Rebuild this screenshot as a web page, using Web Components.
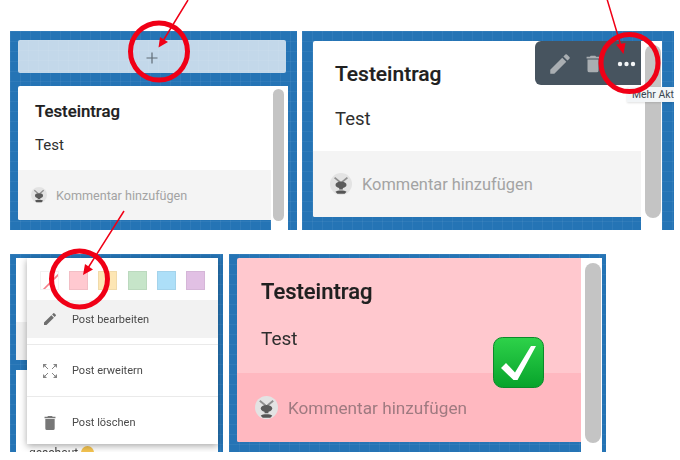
<!DOCTYPE html>
<html lang="de">
<head>
<meta charset="utf-8">
<title>Testeintrag</title>
<style>
html,body{margin:0;padding:0;background:#fff;width:680px;height:460px;overflow:hidden}
body{font-family:Roboto,"Liberation Sans",sans-serif;color:#2b2b2b}
.sheet{filter:blur(.4px);width:680px;height:460px;position:relative;box-sizing:border-box;padding:31px 0 0 10px;display:flex;flex-direction:column;gap:24px}
.row{display:flex}
</style>
</head>
<body>
<template id="t-panel"><style>
:host{display:flex;flex-direction:column;position:relative;overflow:hidden;box-sizing:border-box;
background-color:#2574b5;
background-image:linear-gradient(rgba(255,255,255,.05) 1px,transparent 1px),linear-gradient(90deg,rgba(255,255,255,.05) 1px,transparent 1px);
background-size:10px 10px}
</style><slot></slot></template>

<template id="t-add"><style>
:host{display:flex;align-items:center;justify-content:center;box-sizing:border-box;border-radius:2px;padding-top:2px;
background-color:#c3d8ea;
background-image:linear-gradient(rgba(255,255,255,.05) 1px,transparent 1px),linear-gradient(90deg,rgba(255,255,255,.05) 1px,transparent 1px);
background-size:10px 10px}
svg{display:block}
</style><svg width="12" height="12" viewBox="0 0 12 12"><path d="M6 .5v11M.5 6h11" stroke="#5f6b75" stroke-width="1.2" fill="none"/></svg></template>

<template id="t-post"><style>
:host{display:flex;flex:1;min-height:0;align-items:stretch}
.card{flex:1;min-width:0;display:flex;flex-direction:column;border-radius:2px 0 0 2px;overflow:hidden;background:var(--bg,#fff);margin-bottom:var(--mb,10px);position:relative}
.body{flex:1;box-sizing:border-box;padding:var(--pt,14px) 0 0 var(--pl,17px)}
.title{font-size:var(--ts,16.8px);font-weight:500;line-height:var(--tl,22px);color:#202020;-webkit-text-stroke:.2px #202020}
.text{font-size:var(--xs,15px);line-height:var(--xl,20px);margin-top:var(--xm,13px);color:#2e2e2e}
.foot{height:var(--fh,50px);box-sizing:border-box;flex:none;display:flex;align-items:center;gap:var(--fg,9px);padding-left:var(--fp,13px);background:var(--fbg,#f4f4f4);color:var(--fc,#a3a3a3);font-size:var(--fs,12.6px)}
.strip{width:var(--sw,17px);background:var(--sbg,#fff);flex:none;box-sizing:border-box;padding:var(--st,3px) var(--sr,4px) var(--sb,9px) var(--sl,2px);display:flex}
.thumb{flex:1;border-radius:8px;background:#c4c4c4}
</style>
<div class="card"><div class="body"><div class="title">Testeintrag</div><div class="text">Test</div></div>
<div class="foot"><post-avatar></post-avatar><span>Kommentar hinzufügen</span></div></div>
<div class="strip"><div class="thumb"></div></div><slot></slot></template>

<template id="t-avatar"><style>
:host{display:block;flex:none;width:var(--av,16px);height:var(--av,16px)}
svg{display:block;width:100%;height:100%}
</style><svg viewBox="0 0 24 24"><circle cx="12" cy="12" r="12" fill="#e3e3e3"/><path d="M5 5l6 5M19 5l-6 5" stroke="#8f8f8f" stroke-width="2"/><ellipse cx="12" cy="13" rx="6" ry="3.6" fill="#5b5b5b"/><path d="M10 15h4v3h-4z" fill="#5b5b5b"/><path d="M6 20.5c2-2 10-2 12 0l-2 2.2h-8z" fill="#555"/></svg></template>

<template id="t-toolbar"><style>
:host{position:absolute;left:233px;top:10px;width:106px;height:44px;background:#47545f;border-radius:0 0 0 6px;border-top-left-radius:6px;display:block}
svg{position:absolute}
</style>
<svg style="left:12px;top:10px" width="26" height="26" viewBox="0 0 24 24"><path fill="#a9aeb2" d="M3 17.25V21h3.75L17.81 9.94l-3.75-3.75zM20.71 7.04a1 1 0 0 0 0-1.41l-2.34-2.34a1 1 0 0 0-1.41 0l-1.83 1.83 3.75 3.75z"/></svg>
<svg style="left:47px;top:11px" width="22" height="24" viewBox="0 0 24 24"><path fill="#a9aeb2" d="M6 19a2 2 0 0 0 2 2h8a2 2 0 0 0 2-2V7H6zM19 4h-3.500l-1-1h-5l-1 1H5v2h14z"/></svg>
<svg style="left:82px;top:20px" width="19" height="6" viewBox="0 0 19 6"><circle cx="3" cy="3" r="2.200" fill="#f4f6f7"/><circle cx="9.500" cy="3" r="2.200" fill="#f4f6f7"/><circle cx="16" cy="3" r="2.200" fill="#f4f6f7"/></svg></template>

<template id="t-tip"><style>
:host{position:absolute;left:325px;top:56px;width:47px;height:15px;box-sizing:border-box;padding-left:5px;background:#f2f5f7;color:#3a4650;font-size:10.400px;line-height:15px;white-space:nowrap;box-shadow:0 1px 2px rgba(0,0,0,.12)}
</style><slot></slot></template>

<template id="t-menu"><style>
:host{position:absolute;left:17px;top:4px;width:191px;height:186px;background:#fff;box-shadow:0 2px 7px rgba(0,0,0,.35);display:flex;flex-direction:column}
.sw{display:flex;justify-content:space-between;box-sizing:border-box;padding:13px 13px 0 13px;height:42px;flex:none}
</style><div class="sw"><slot name="sw"></slot></div><slot></slot></template>

<template id="t-swatch"><style>
:host{display:block;width:19px;height:19px;box-sizing:border-box;border:1px solid rgba(0,0,0,.05);background:var(--c,#fff);position:relative;overflow:hidden}
svg{position:absolute;inset:0}
</style><slot></slot></template>

<template id="t-item"><style>
:host{display:flex;align-items:center;box-sizing:border-box;height:var(--h,52px);padding:var(--pt,0) 0 var(--pb,0) 15px;gap:14px;font-size:11px;color:#4a4a4a;border-top:var(--b,1px solid #eaeaea);background:linear-gradient(var(--hover,#fff) 0 var(--hh,100%),#fff 0);flex:none}
::slotted(svg){flex:none;display:block}
</style><slot name="i"></slot><span><slot></slot></span></template>

<template id="t-check"><style>
:host{position:absolute;left:264px;top:83px;width:51px;height:51px;display:block}
svg{display:block}
</style><svg width="51" height="51" viewBox="0 0 51 51"><defs><linearGradient id="g" x1="0" y1="0" x2="0" y2="1"><stop offset="0" stop-color="#2ed24a"/><stop offset="1" stop-color="#07a32b"/></linearGradient></defs><rect x=".5" y=".5" width="50" height="50" rx="9" fill="url(#g)" stroke="#0b8a2a"/><path d="M8 31l5-5 9 9.500L38 9h5L24.500 43h-4z" fill="#fff"/></svg></template>

<template id="t-ink"><style>
:host{position:absolute;left:0;top:0;width:680px;height:460px;display:block;pointer-events:none}
svg{display:block}
</style><svg width="680" height="460" viewBox="0 0 680 460" fill="none" stroke="#f00016">
<circle cx="159" cy="51.500" r="28.500" stroke-width="5"/>
<circle cx="629.500" cy="63" r="28.500" stroke-width="5"/>
<circle cx="79.500" cy="279" r="28" stroke-width="5"/>
<path d="M188 0L163 41M607 -1L621 46M124 211L88 268" stroke-width="1.500"/>
<path d="M158.500 47.500L160 37L168 42zM623.500 54L616 44.500L625.500 43zM83 275L85 264L93 269.500z" fill="#f00016" stroke="none"/>
</svg></template>

<div class="sheet">
  <div class="row" style="gap:5px;height:199px">
    <board-panel style="width:287px;padding:9px 9px 0 8px">
      <add-bar style="height:33px;margin:0 2px 13px 0"></add-bar>
      <post-card></post-card>
    </board-panel>
    <board-panel style="width:372px;padding:10px 12px 0 11px">
      <post-card style="--ts:21px;--tl:28px;--pt:19px;--pl:22px;--xs:18.500px;--xl:24px;--xm:19px;--fh:66px;--fs:16.400px;--fp:17px;--fg:10px;--av:22px;--mb:13px;--sw:21px;--st:4px;--sr:1px;--sb:12px;--sl:4px"></post-card>
      <action-toolbar></action-toolbar>
      <more-tip>Mehr Akt</more-tip>
    </board-panel>
  </div>
  <div class="row" style="gap:6px;height:198px">
    <board-panel style="width:213px;padding:4px 5px 0 6px">
      <div style="height:64px;background:#fff;flex:none"></div>
      <div style="height:38px;background:#f1f1f1;flex:none"></div>
      <div style="height:10px;flex:none"></div>
      <div style="flex:1;background:#fff;padding:76px 0 0 13px;font-size:12px;line-height:14px;color:#444;white-space:nowrap">geschaut <svg width="13" height="13" viewBox="0 0 13 13" style="vertical-align:-2px"><circle cx="6.500" cy="6.500" r="6.500" fill="#f5c451"/></svg></div>
      <post-menu>
        <color-swatch slot="sw"><svg viewBox="0 0 19 19" width="19" height="19"><path d="M1 19L19 1" stroke="#f5808a" stroke-width="1.600"/></svg></color-swatch>
        <color-swatch slot="sw" style="--c:#ffc9d0"></color-swatch>
        <color-swatch slot="sw" style="--c:#fde6b4"></color-swatch>
        <color-swatch slot="sw" style="--c:#c6e5c9"></color-swatch>
        <color-swatch slot="sw" style="--c:#addff8"></color-swatch>
        <color-swatch slot="sw" style="--c:#e1c0e4"></color-swatch>
        <menu-item style="--h:44px;--b:0;--hover:#f2f2f2;--hh:38px;--pb:6px">
          <svg slot="i" width="16" height="16" viewBox="0 0 24 24"><path fill="#6e6e6e" d="M3 17.250V21h3.750L17.810 9.940l-3.750-3.750zM20.710 7.040a1 1 0 0 0 0-1.410l-2.340-2.340a1 1 0 0 0-1.410 0l-1.830 1.830 3.750 3.750z"/></svg>Post bearbeiten</menu-item>
        <menu-item>
          <svg slot="i" width="16" height="16" viewBox="0 0 16 16" fill="#858585" stroke="none"><path d="M1 1h4L1 5zM15 1h-4l4 4zM1 15h4l-4-4zM15 15h-4l4-4z"/><path d="M2.500 2.500l3.500 3.500M13.500 2.500L10 6M2.500 13.500L6 10M13.500 13.500L10 10" stroke="#858585" stroke-width="1"/></svg>Post erweitern</menu-item>
        <menu-item style="--h:48px;--pt:4px">
          <svg slot="i" width="16" height="18" viewBox="1.750 .5 20.500 23"><path fill="#777" d="M6 19a2 2 0 0 0 2 2h8a2 2 0 0 0 2-2V7H6zM19 4h-3.500l-1-1h-5l-1 1H5v2h14z"/></svg>Post löschen</menu-item>
      </post-menu>
    </board-panel>
    <board-panel style="width:377px;padding:4px 4px 0 8px">
      <post-card style="--bg:#ffc8ce;--fbg:#ffb8c0;--fc:#9f7a80;--ts:22px;--tl:30px;--pt:19px;--pl:24px;--xs:19px;--xl:26px;--xm:19px;--fh:69px;--fs:17.200px;--fp:18px;--fg:10px;--av:23px;--mb:10px;--sw:21px;--st:5px;--sr:1px;--sb:9px;--sl:4px"></post-card>
      <check-mark></check-mark>
    </board-panel>
  </div>
  <red-ink></red-ink>
</div>
<script>
function el(name,tid){customElements.define(name,class extends HTMLElement{constructor(){super();this.attachShadow({mode:'open'}).appendChild(document.getElementById(tid).content.cloneNode(true));}});}
el('post-avatar','t-avatar');
el('board-panel','t-panel');
el('add-bar','t-add');
el('post-card','t-post');
el('action-toolbar','t-toolbar');
el('more-tip','t-tip');
el('post-menu','t-menu');
el('color-swatch','t-swatch');
el('menu-item','t-item');
el('check-mark','t-check');
el('red-ink','t-ink');
</script>
</body>
</html>
